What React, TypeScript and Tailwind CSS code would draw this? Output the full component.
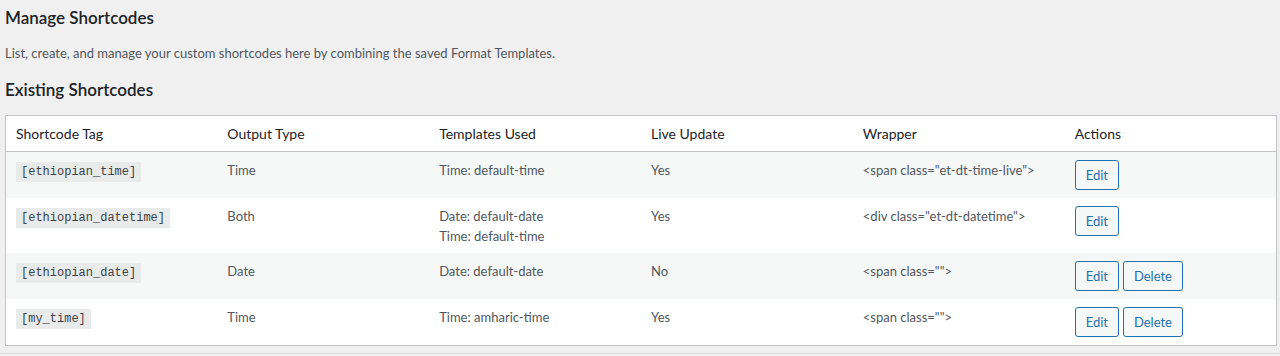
import React from 'react';

interface Shortcode {
  tag: string;
  outputType: string;
  templates: string[];
  liveUpdate: string;
  wrapper: string;
  deletable: boolean;
}

const SHORTCODES: Shortcode[] = [
  { tag: '[ethiopian_time]', outputType: 'Time', templates: ['Time: default-time'], liveUpdate: 'Yes', wrapper: '<span class="et-dt-time-live">', deletable: false },
  { tag: '[ethiopian_datetime]', outputType: 'Both', templates: ['Date: default-date', 'Time: default-time'], liveUpdate: 'Yes', wrapper: '<div class="et-dt-datetime">', deletable: false },
  { tag: '[ethiopian_date]', outputType: 'Date', templates: ['Date: default-date'], liveUpdate: 'No', wrapper: '<span class="">', deletable: true },
  { tag: '[my_time]', outputType: 'Time', templates: ['Time: amharic-time'], liveUpdate: 'Yes', wrapper: '<span class="">', deletable: true },
];

const COLUMNS = ['Shortcode Tag', 'Output Type', 'Templates Used', 'Live Update', 'Wrapper', 'Actions'];

function ActionButton({ label }: { label: string }) {
  return (
    <button
      type="button"
      className="h-[30px] px-[10px] text-[13px] leading-[28px] text-[#2271b1] bg-[#f6f7f7] border border-[#2271b1] rounded-[3px]"
    >
      {label}
    </button>
  );
}

export default function App() {
  const cell = 'px-[10px] pt-[9px] pb-[7px] align-top text-[13px] leading-[19.5px] text-[#50575e]';

  return (
    <div className="min-h-[356px] bg-[#f0f0f1] pl-[5px] pr-[3px] text-[#3c434a] font-['Lato','Noto_Sans',sans-serif]">
      <h2 className="pt-[6px] text-[17px] leading-[24px] font-semibold text-[#1d2327]">Manage Shortcodes</h2>
      <p className="mt-[13px] text-[13px] leading-[20px] text-[#50575e]">
        List, create, and manage your custom shortcodes here by combining the saved Format Templates.
      </p>
      <h3 className="mt-[15px] text-[17px] leading-[24px] font-semibold text-[#1d2327]">Existing Shortcodes</h3>

      <table className="mt-[13px] w-full table-fixed border border-[#c3c4c7] bg-white border-collapse">
        <thead>
          <tr className="border-b border-[#c3c4c7]">
            {COLUMNS.map((col) => (
              <th key={col} className="px-[10px] py-[8px] text-left text-[14px] leading-[19px] font-normal text-[#1d2327]">
                {col}
              </th>
            ))}
          </tr>
        </thead>
        <tbody>
          {SHORTCODES.map((sc, i) => (
            <tr key={sc.tag} className={i % 2 === 0 ? 'bg-[#f6f7f7]' : 'bg-white'}>
              <td className={cell}>
                <code className="inline-block px-[5px] leading-[20px] bg-[#e9eaea] text-[#3c434a] text-[12px] font-['Liberation_Mono',monospace]">
                  {sc.tag}
                </code>
              </td>
              <td className={cell}>{sc.outputType}</td>
              <td className={cell}>
                {sc.templates.map((t) => (
                  <div key={t}>{t}</div>
                ))}
              </td>
              <td className={cell}>{sc.liveUpdate}</td>
              <td className={cell}>{sc.wrapper}</td>
              <td className="px-[10px] py-[8px] align-top">
                <div className="flex gap-[4px]">
                  <ActionButton label="Edit" />
                  {sc.deletable && <ActionButton label="Delete" />}
                </div>
              </td>
            </tr>
          ))}
        </tbody>
      </table>

      <div className="-ml-[5px] -mr-[3px] mt-[7px] border-t border-[#dcdcde]" />
    </div>
  );
}
